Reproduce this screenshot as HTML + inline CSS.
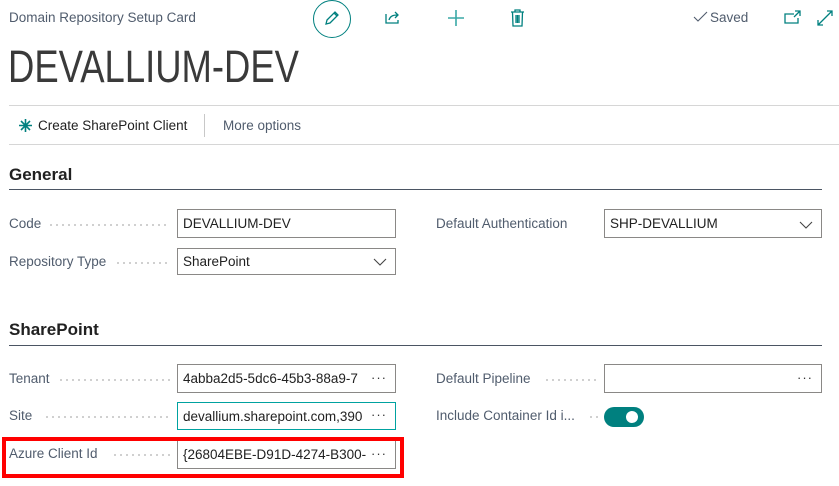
<!DOCTYPE html>
<html><head><style>
body{margin:0;width:839px;height:486px;background:#fff;font-family:"Liberation Sans",sans-serif;position:relative;overflow:hidden;color:#212121}
.a{position:absolute}
.lbl{position:absolute;font-size:13.5px;color:#505c6d;white-space:nowrap}
.dots{position:absolute;height:2px;background-image:radial-gradient(circle,#c4c4c4 0.9px,transparent 1.1px);background-size:6px 2px;background-repeat:repeat-x}
.inp{position:absolute;border:1px solid #8a8886;box-sizing:border-box;font-size:13.5px;color:#212121;padding:0 0 0 5px;display:flex;align-items:center;overflow:hidden;white-space:nowrap;background:#fff}
.more{position:absolute;right:8px;top:50%;transform:translateY(-60%);font-size:13px;color:#333;letter-spacing:1px}
.hdr{position:absolute;left:9px;font-size:17px;font-weight:bold;color:#212121}
</style></head><body>
<div class="a" style="left:9px;top:10px;font-size:13.5px;color:#505c6d">Domain Repository Setup Card</div>
<div class="a" style="left:313px;top:0px;width:36px;height:36px;border:1.5px solid #00807f;border-radius:50%"></div>
<svg class="a" style="left:322px;top:8px" width="20" height="20" viewBox="0 0 20 20" fill="none" stroke="#00807f" stroke-width="1.3"><path d="M4 16 L5 12 L13 4 L16 7 L8 15 Z M12 5 L15 8"/></svg>
<svg class="a" style="left:384px;top:9px" width="18" height="16" viewBox="0 0 18 16" fill="none" stroke="#00807f" stroke-width="1.3"><path d="M2 5 V14 H14 V11 M5 11 C6 7 9 6 13 6 M11 3 L14 6 L11 9"/></svg>
<svg class="a" style="left:447px;top:9px" width="18" height="18" viewBox="0 0 18 18" stroke="#3aa8a6" stroke-width="1.6"><path d="M9 1 V17 M1 9 H17"/></svg>
<svg class="a" style="left:510px;top:9px" width="15" height="18" viewBox="0 0 15 18" fill="none" stroke="#00807f" stroke-width="1.3"><path d="M1 3 H14 M5 3 V1 H10 V3 M2.5 3 L3 17 H12 L12.5 3 M6 6 V14 M7.5 6 V14 M9 6 V14"/></svg>
<svg class="a" style="left:693px;top:11px" width="16" height="12" viewBox="0 0 16 12" fill="none" stroke="#505c6d" stroke-width="1.1"><path d="M1 6 L5 10 L14 1"/></svg>
<div class="a" style="left:710px;top:10px;font-size:13.5px;color:#505c6d">Saved</div>
<svg class="a" style="left:784px;top:10px" width="18" height="16" viewBox="0 0 18 16" fill="none" stroke="#00807f" stroke-width="1.3"><path d="M10 4 H1 V13 H14 V8 M11 1 H16 V6 M16 1 L10 7"/></svg>
<svg class="a" style="left:816px;top:9px" width="18" height="18" viewBox="0 0 18 18" fill="none" stroke="#00807f" stroke-width="1.3"><path d="M2 16 L16 2 M2 11 V16 H7 M11 2 H16 V7"/></svg>
<div class="a" style="left:8px;top:41px;font-size:45px;color:#3a3a3a;transform:scaleX(0.81);transform-origin:0 0;white-space:nowrap">DEVALLIUM-DEV</div>
<div class="a" style="left:9px;right:0;top:105px;border-top:1px solid #d6d6d6"></div>
<svg class="a" style="left:18px;top:118px" width="15" height="15" viewBox="0 0 15 15" stroke="#00807f" stroke-width="1.6"><path d="M7.5 1 V14 M1 7.5 H14 M3 3 L12 12 M12 3 L3 12"/></svg>
<div class="a" style="left:38px;top:118px;font-size:13.5px;color:#212121">Create SharePoint Client</div>
<div class="a" style="left:204px;top:114px;height:23px;border-left:1px solid #c8c8c8"></div>
<div class="a" style="left:223px;top:118px;font-size:13.5px;color:#505c6d">More options</div>
<div class="a" style="left:9px;right:0;top:144px;border-top:1px solid #d6d6d6"></div>

<div class="hdr" style="top:165px">General</div>
<div class="a" style="left:9px;width:813px;top:189px;border-top:1.5px solid #4b5563"></div>
<div class="lbl" style="left:9px;top:216px">Code</div><div class="dots" style="left:48px;width:122px;top:224px"></div>
<div class="inp" style="left:177px;top:209px;width:219px;height:29px">DEVALLIUM-DEV</div>
<div class="lbl" style="left:9px;top:254px">Repository Type</div><div class="dots" style="left:115px;width:55px;top:262px"></div>
<div class="inp" style="left:177px;top:248px;width:219px;height:27px">SharePoint<svg style="position:absolute;right:8px;top:9px" width="14" height="8" viewBox="0 0 14 8" fill="none" stroke="#444" stroke-width="1.1"><path d="M1 1 L7 7 L13 1"/></svg></div>
<div class="lbl" style="left:436px;top:216px">Default Authentication</div>
<div class="inp" style="left:604px;top:209px;width:218px;height:29px">SHP-DEVALLIUM<svg style="position:absolute;right:8px;top:11px" width="14" height="8" viewBox="0 0 14 8" fill="none" stroke="#444" stroke-width="1.1"><path d="M1 1 L7 7 L13 1"/></svg></div>

<div class="hdr" style="top:320px">SharePoint</div>
<div class="a" style="left:9px;width:813px;top:345px;border-top:1.5px solid #4b5563"></div>
<div class="lbl" style="left:9px;top:371px">Tenant</div><div class="dots" style="left:58px;width:112px;top:379px"></div>
<div class="inp" style="left:177px;top:364px;width:219px;height:29px">4abba2d5-5dc6-45b3-88a9-7<span class="more">···</span></div>
<div class="lbl" style="left:9px;top:408px">Site</div><div class="dots" style="left:44px;width:126px;top:416px"></div>
<div class="inp" style="left:177px;top:402px;width:219px;height:28px;border-color:#00a2a0">devallium.sharepoint.com,390<span class="more" style="background:#fff;padding-left:6px">···</span></div>
<div class="lbl" style="left:9px;top:446px">Azure Client Id</div><div class="dots" style="left:112px;width:58px;top:454px"></div>
<div class="inp" style="left:177px;top:440px;width:219px;height:29px">{26804EBE-D91D-4274-B300-<span class="more">···</span></div>
<div class="a" style="left:2px;top:437px;width:394px;height:33px;border:4px solid #ff0000"></div>
<div class="lbl" style="left:436px;top:371px">Default Pipeline</div><div class="dots" style="left:544px;width:54px;top:379px"></div>
<div class="inp" style="left:604px;top:364px;width:218px;height:29px"><span class="more">···</span></div>
<div class="lbl" style="left:436px;top:408px">Include Container Id i...</div><div class="dots" style="left:588px;width:10px;top:416px"></div>
<div class="a" style="left:604px;top:407px;width:40px;height:20px;border-radius:10px;background:#00807f"></div>
<div class="a" style="left:626px;top:411px;width:12px;height:12px;border-radius:50%;background:#fff"></div>
</body></html>
